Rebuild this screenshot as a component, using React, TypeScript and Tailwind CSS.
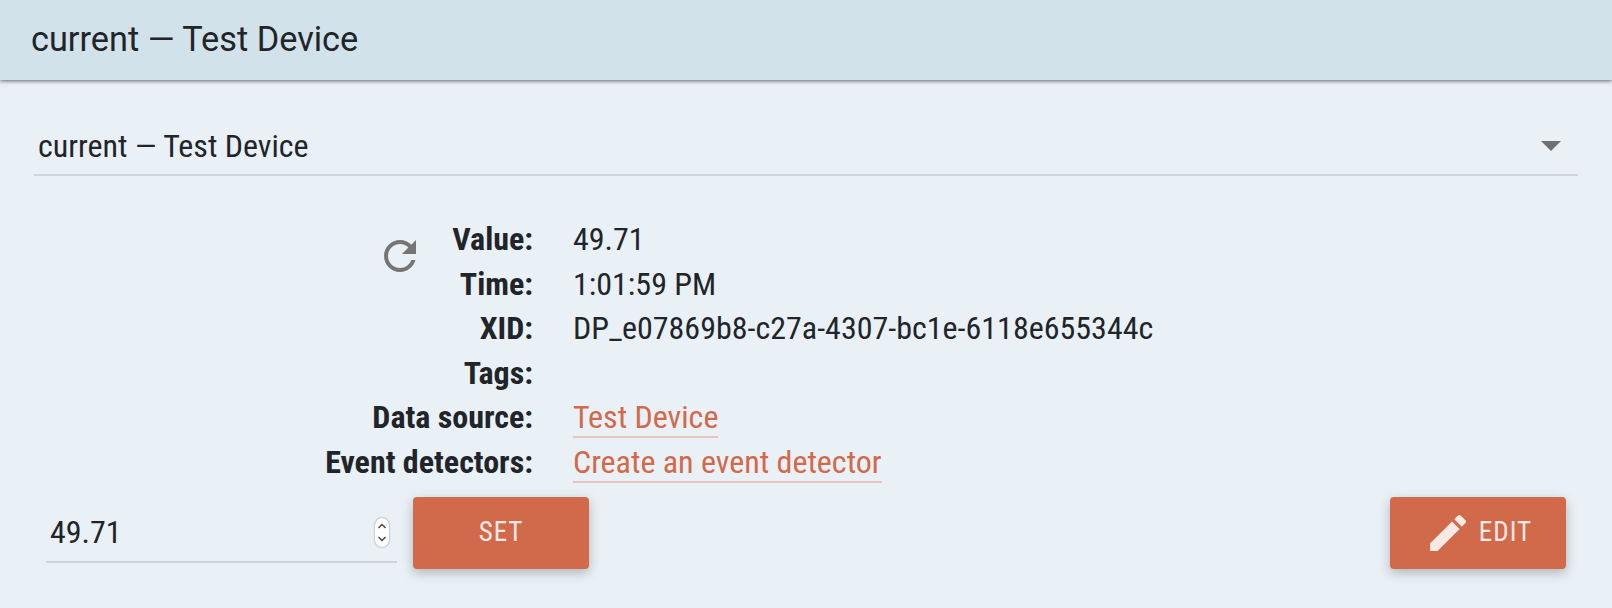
import React from 'react';

const ROWS = [
    { label: 'Time:', value: '1:01:59 PM' },
    { label: 'XID:', value: 'DP_e07869b8-c27a-4307-bc1e-6118e655344c' },
    { label: 'Tags:', value: '' },
];

const LINKS = [
    { label: 'Data source:', value: 'Test Device' },
    { label: 'Event detectors:', value: 'Create an event detector' },
];

export default function App() {
    return (
        <div className="w-[1612px] h-[608px] overflow-hidden bg-[#e9f1f7] text-[#212529] font-['Roboto',sans-serif]">
            {/* Header */}
            <div className="h-[80px] bg-[#d2e2ea] flex items-center pl-[31px] text-[34.3px] shadow-[0_1px_4px_rgba(0,0,0,0.6)]">
                current — Test Device
            </div>

            <div className="px-[34px]">
                {/* Point select */}
                <div className="mt-[34px] h-[62px] flex items-center justify-between pt-[4px] pl-[4px] pr-[17px] border-b-2 border-[#d1d5d8] text-[32px] [font-stretch:75%]">
                    <span>current — Test Device</span>
                    <svg width="20" height="10" viewBox="0 0 20 10"><path d="M0 0h20L10 10z" fill="#707070" /></svg>
                </div>

                {/* Details */}
                <div className="mt-[41px] grid grid-cols-[499px_1fr] gap-x-[40px] auto-rows-[44.6px] text-[32px] [font-stretch:75%] leading-[44px]">
                    <div className="flex justify-end font-bold">
                        <svg className="mr-[28px] mt-[15px] -mb-[19px] w-[48px] h-[48px]" viewBox="0 0 24 24">
                            <path fill="#757575" d="M17.65 6.35C16.2 4.9 14.21 4 12 4c-4.42 0-7.99 3.58-7.99 8s3.57 8 7.99 8c3.73 0 6.84-2.55 7.73-6h-2.08c-.82 2.33-3.04 4-5.65 4-3.31 0-6-2.69-6-6s2.69-6 6-6c1.66 0 3.14.69 4.22 1.78L13 11h7V4l-2.35 2.35z" />
                        </svg>
                        Value:
                    </div>
                    <div>49.71</div>
                    {ROWS.map((row) => (
                        <React.Fragment key={row.label}>
                            <div className="text-right font-bold">{row.label}</div>
                            <div>{row.value}</div>
                        </React.Fragment>
                    ))}
                    {LINKS.map((row) => (
                        <React.Fragment key={row.label}>
                            <div className="text-right font-bold">{row.label}</div>
                            <div>
                                <a className="inline-block h-[43px] text-[#d16a4a] border-b-2 border-[#e9c3b8]">{row.value}</a>
                            </div>
                        </React.Fragment>
                    ))}
                </div>

                {/* Actions */}
                <div className="mt-[12px] flex items-start justify-between pr-[12px]">
                    <div className="flex items-start pl-[12px]">
                        <div className="relative w-[351px] h-[66px] flex items-center pt-[6px] pl-[4px] border-b-2 border-[#d1d5d8] text-[32px] [font-stretch:75%]">
                            49.71
                            <div className="absolute right-[8px] top-[21px] w-[14px] h-[29px] rounded-full bg-white shadow-[0_0_2px_rgba(0,0,0,0.5)] flex items-center justify-center">
                                <svg width="10" height="21" viewBox="0 0 10 21" fill="none" stroke="#444" strokeWidth="1.4">
                                    <path d="M1.5 6L5 2.5 8.5 6M1.5 15L5 18.5 8.5 15" />
                                </svg>
                            </div>
                        </div>
                        <button className="ml-[16px] w-[176px] h-[72px] rounded-[4px] bg-[#d16a4a] text-[#f8e9e4] text-[27px] [font-stretch:75%] tracking-[1px] shadow-[0_4px_12px_rgba(0,0,0,0.25)]">
                            SET
                        </button>
                    </div>
                    <button className="w-[176px] h-[72px] pl-[6px] rounded-[4px] bg-[#d16a4a] text-[#f8e9e4] text-[27px] [font-stretch:75%] tracking-[1px] shadow-[0_4px_12px_rgba(0,0,0,0.25)] flex items-center justify-center gap-[13px]">
                        <svg className="w-[48px] h-[48px] -mx-[6px]" viewBox="0 0 24 24">
                            <path fill="#f8e9e4" d="M3 17.25V21h3.75L17.81 9.94l-3.75-3.75L3 17.25zM20.71 7.04c.39-.39.39-1.02 0-1.41l-2.34-2.34c-.39-.39-1.02-.39-1.41 0l-1.83 1.83 3.75 3.75 1.83-1.83z" />
                        </svg>
                        EDIT
                    </button>
                </div>
            </div>
        </div>
    );
}
